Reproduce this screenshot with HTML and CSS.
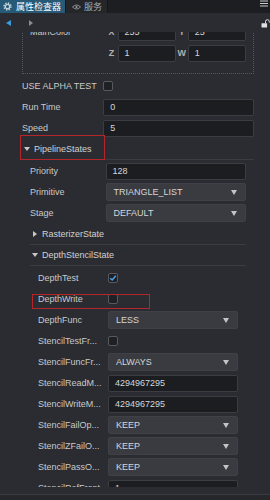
FILE: index.html
```html
<!DOCTYPE html>
<html lang="zh">
<head>
    <meta charset="UTF-8">
    <meta name="viewport" content="width=device-width, initial-scale=1.0">
    <title>属性检查器</title>
    <link rel="stylesheet" href="styles.css">
</head>
<body>
    <div class="tabs">
        <div class="tab active">
            <svg width="9" height="9" viewBox="0 0 9 9"><circle cx="4.5" cy="4.5" r="3.4" fill="none" stroke="#c3d2db" stroke-width="1.6" stroke-dasharray="1.34 1.33"/><circle cx="4.5" cy="4.5" r="2.2" fill="none" stroke="#c3d2db" stroke-width="1.3"/></svg>
            属性检查器
        </div>
        <div class="tab">
            <svg width="9" height="6" viewBox="0 0 9 6"><path d="M0.5 3 Q4.5 -1 8.5 3 Q4.5 7 0.5 3Z" fill="none" stroke="#9a9ca0" stroke-width="0.9"/><circle cx="4.5" cy="3" r="1.1" fill="#9a9ca0"/></svg>
            服务
        </div>
        <svg class="menu" width="8" height="7" viewBox="0 0 8 7"><path d="M0 1H8M0 3.5H8M0 6H8" stroke="#c8c8c8" stroke-width="1"/></svg>
    </div>

    <div class="panel">
        <div class="toolbar">
            <div class="nav">
                <span class="arrow-left"></span>
                <span class="arrow-right"></span>
            </div>
            <svg width="9" height="9" viewBox="0 0 9 9"><path d="M4.5 4.5V2.6a1.9 1.9 0 0 1 3.8 0V3.6" fill="none" stroke="#e0e0e0" stroke-width="1"/><rect x="0.5" y="4.2" width="5.6" height="4.3" rx="0.6" fill="#e0e0e0"/></svg>
        </div>

        <div class="view">
            <div class="scroll">
                <div class="dotted">
                    <div class="row">
                        <label>MainColor</label>
                        <div class="vec">
                            <span class="axis">X</span><div class="input">255</div>
                            <span class="axis">Y</span><div class="input">25</div>
                        </div>
                    </div>
                    <div class="row">
                        <label></label>
                        <div class="vec">
                            <span class="axis">Z</span><div class="input">1</div>
                            <span class="axis">W</span><div class="input">1</div>
                        </div>
                    </div>
                </div>

                <div class="row"><label>USE ALPHA TEST</label><span class="check"></span></div>
                <div class="row"><label>Run Time</label><div class="input">0</div></div>
                <div class="row"><label>Speed</label><div class="input">5</div></div>

                <div class="header top">
                    <span class="tri down"></span>PipelineStates
                    <span class="mark mark-pipeline"></span>
                </div>
                <div class="level">
                    <div class="row"><label>Priority</label><div class="input">128</div></div>
                    <div class="row"><label>Primitive</label><div class="select">TRIANGLE_LIST<span class="caret"></span></div></div>
                    <div class="row"><label>Stage</label><div class="select">DEFAULT<span class="caret"></span></div></div>

                    <div class="header"><span class="tri right"></span>RasterizerState</div>
                    <div class="header"><span class="tri down"></span>DepthStencilState</div>

                    <div class="level">
                        <div class="row"><label>DepthTest</label><span class="check on"><svg width="8" height="8" viewBox="0 0 8 8"><path d="M1.2 4.2L3.2 6L6.8 1.8" fill="none" stroke="#4aa3e8" stroke-width="1.5"/></svg></span></div>
                        <div class="row">
                            <label>DepthWrite</label><span class="check"></span>
                            <span class="mark mark-write"></span>
                        </div>
                        <div class="row"><label>DepthFunc</label><div class="select">LESS<span class="caret"></span></div></div>
                        <div class="row"><label>StencilTestFr...</label><span class="check"></span></div>
                        <div class="row"><label>StencilFuncFr...</label><div class="select">ALWAYS<span class="caret"></span></div></div>
                        <div class="row"><label>StencilReadM...</label><div class="input">4294967295</div></div>
                        <div class="row"><label>StencilWriteM...</label><div class="input">4294967295</div></div>
                        <div class="row"><label>StencilFailOp...</label><div class="select">KEEP<span class="caret"></span></div></div>
                        <div class="row"><label>StencilZFailO...</label><div class="select">KEEP<span class="caret"></span></div></div>
                        <div class="row"><label>StencilPassO...</label><div class="select">KEEP<span class="caret"></span></div></div>
                        <div class="row"><label>StencilRefFront</label><div class="input">1</div></div>
                    </div>
                </div>
            </div>
        </div>

        <div class="footer"></div>
    </div>
</body>
</html>
```

FILE: styles.css
```css
body {
    margin: 0;
    width: 270px;
    height: 500px;
    overflow: hidden;
    background-color: #2a2c31;
    font-family: 'Liberation Sans', 'Noto Sans CJK SC', sans-serif;
    font-size: 9px;
    color: #c9c9c9;
}
.tabs {
    display: flex;
    height: 13px;
    background-color: #1c1e22;
}
.tab {
    display: flex;
    align-items: center;
    gap: 3px;
    padding: 0 5px 0 6px;
    font-family: 'Noto Sans CJK SC', sans-serif;
    font-size: 9px;
    color: #a9abae;
    background-color: #24262a;
    border-right: 1px solid #151619;
}
.tab.active {
    gap: 4px;
    padding: 0 4px 0 3px;
    background-color: #275a76;
    color: #ffffff;
}
.menu {
    margin: 0 2px 0 auto;
}
.panel {
    display: flex;
    flex-direction: column;
    height: 487px;
}
.toolbar {
    display: flex;
    align-items: center;
    justify-content: space-between;
    box-sizing: border-box;
    height: 19px;
    padding: 2px 0 0 6px;
}
.nav {
    display: flex;
    align-items: center;
    gap: 18px;
}
.arrow-left {
    width: 0;
    height: 0;
    border-top: 3.5px solid transparent;
    border-bottom: 3.5px solid transparent;
    border-right: 5px solid #3d9be0;
}
.arrow-right {
    width: 0;
    height: 0;
    border-top: 3.5px solid transparent;
    border-bottom: 3.5px solid transparent;
    border-left: 4.5px solid #8a8c90;
}
.view {
    height: 456px;
    overflow: hidden;
}
.scroll {
    margin-top: -15px;
    padding: 0 16px 0 22px;
}
.footer {
    margin-top: 7px;
    height: 5px;
    border-top: 1px solid #393b40;
    background-color: #25272b;
}
.dotted {
    border: 1px dotted #55575d;
    padding: 4px 7px 9px;
    margin-bottom: 2px;
}
.row {
    position: relative;
    display: grid;
    grid-template-columns: 35% 1fr;
    align-items: center;
    height: 21px;
}
label {
    white-space: nowrap;
    overflow: hidden;
    padding-right: 4px;
}
.input {
    display: flex;
    align-items: center;
    box-sizing: border-box;
    height: 17px;
    padding: 0 6px;
    background-color: #1b1d21;
    border: 1px solid #3b3d43;
    border-radius: 2px;
    color: #d6d6d6;
}
.select {
    display: flex;
    align-items: center;
    justify-content: space-between;
    box-sizing: border-box;
    height: 18px;
    padding: 0 8px 0 7px;
    background-color: #393b41;
    border: 1px solid #3f4147;
    border-radius: 2px;
    color: #d6d6d6;
}
.caret {
    width: 0;
    height: 0;
    border-left: 3.5px solid transparent;
    border-right: 3.5px solid transparent;
    border-top: 5px solid #c4c4c4;
}
.vec {
    display: grid;
    grid-template-columns: 12px 1fr 12px 1fr;
    align-items: center;
}
.axis {
    text-align: center;
    color: #b0b0b0;
    font-weight: bold;
}
.check {
    display: flex;
    align-items: center;
    justify-content: center;
    box-sizing: border-box;
    width: 10px;
    height: 10px;
    border: 1px solid #57595f;
    border-radius: 2px;
    background-color: #1e2024;
}
.header {
    position: relative;
    display: flex;
    align-items: center;
    gap: 4px;
    height: 20px;
    padding-left: 2px;
    border-bottom: 1px solid #3a3c42;
    color: #d2d2d2;
}
.tri {
    display: flex;
    justify-content: center;
    width: 6px;
}
.tri.down::before {
    content: '';
    border-left: 3px solid transparent;
    border-right: 3px solid transparent;
    border-top: 4px solid #c8c8c8;
}
.tri.right::before {
    content: '';
    border-top: 3px solid transparent;
    border-bottom: 3px solid transparent;
    border-left: 4px solid #c8c8c8;
}
.level {
    padding: 1px 8px 0;
}
.level .level {
    padding-top: 2px;
}
.mark {
    position: absolute;
    border: 1px solid #b3262b;
}
.mark-pipeline {
    left: -2px;
    top: -4px;
    width: 83px;
    height: 23px;
}
.mark-write {
    left: -6px;
    top: 5px;
    width: 116px;
    height: 13px;
}
```
